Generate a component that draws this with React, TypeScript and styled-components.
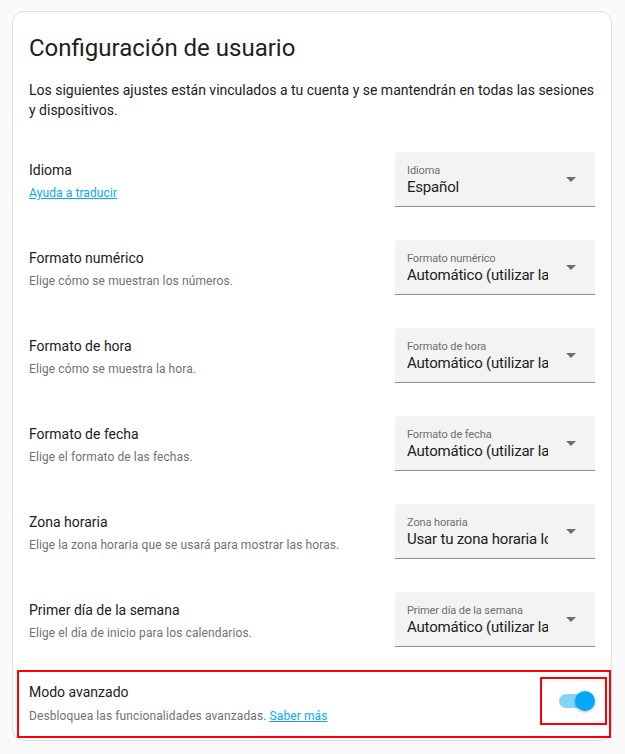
import styled, { createGlobalStyle } from "styled-components";

interface SelectRow {
  label: string;
  secondary: string;
  fieldLabel: string;
  value: string;
  link?: boolean;
}

const rows: SelectRow[] = [
  {
    label: "Idioma",
    secondary: "Ayuda a traducir",
    fieldLabel: "Idioma",
    value: "Español",
    link: true,
  },
  {
    label: "Formato numérico",
    secondary: "Elige cómo se muestran los números.",
    fieldLabel: "Formato numérico",
    value: "Automático (utilizar la configuración de idioma)",
  },
  {
    label: "Formato de hora",
    secondary: "Elige cómo se muestra la hora.",
    fieldLabel: "Formato de hora",
    value: "Automático (utilizar la configuración de idioma)",
  },
  {
    label: "Formato de fecha",
    secondary: "Elige el formato de las fechas.",
    fieldLabel: "Formato de fecha",
    value: "Automático (utilizar la configuración de idioma)",
  },
  {
    label: "Zona horaria",
    secondary: "Elige la zona horaria que se usará para mostrar las horas.",
    fieldLabel: "Zona horaria",
    value: "Usar tu zona horaria local",
  },
  {
    label: "Primer día de la semana",
    secondary: "Elige el día de inicio para los calendarios.",
    fieldLabel: "Primer día de la semana",
    value: "Automático (utilizar la configuración de idioma)",
  },
];

export default function App() {
  return (
    <>
      <GlobalStyle />
      <Page>
        <Card>
          <Header>
            <Title>Configuración de usuario</Title>
            <Description>
              Los siguientes ajustes están vinculados a tu cuenta y se
              mantendrán en todas las sesiones y dispositivos.
            </Description>
          </Header>

          {rows.map((row) => (
            <Row key={row.label}>
              <Info $gap={5} $offset={3}>
                <Heading>{row.label}</Heading>
                {row.link ? (
                  <Secondary>
                    <Link href="#">{row.secondary}</Link>
                  </Secondary>
                ) : (
                  <Secondary>{row.secondary}</Secondary>
                )}
              </Info>
              <Select>
                <FieldLabel>{row.fieldLabel}</FieldLabel>
                <FieldValue>{row.value}</FieldValue>
                <Arrow />
              </Select>
            </Row>
          ))}

          <Highlight>
            <Info $gap={6} $offset={-2}>
              <Heading>Modo avanzado</Heading>
              <Secondary>
                Desbloquea las funcionalidades avanzadas.{" "}
                <Link href="#">Saber más</Link>
              </Secondary>
            </Info>
            <ToggleBox>
              <Track>
                <Thumb />
              </Track>
            </ToggleBox>
          </Highlight>
        </Card>
      </Page>
    </>
  );
}

const GlobalStyle = createGlobalStyle`
  body {
    margin: 0;
    background: #fafafa;
    font-family: Roboto, "Liberation Sans", sans-serif;
    color: #212121;
  }
`;

const Page = styled.div`
  padding: 11px 13px 12px 12px;
`;

const Card = styled.div`
  background: #ffffff;
  border: 1px solid #e0e0e0;
  border-radius: 12px;
  padding-bottom: 2px;
`;

const Header = styled.div`
  padding: 20px 16px 15px;
`;

const Title = styled.h1`
  margin: 0;
  font-size: 24px;
  font-weight: 400;
  line-height: 32px;
  color: #212121;
`;

const Description = styled.p`
  margin: 16px 0 0;
  font-size: 14px;
  line-height: 20px;
  color: #212121;
`;

const Row = styled.div`
  display: flex;
  align-items: center;
  justify-content: space-between;
  height: 88px;
  padding: 0 16px;
`;

const Info = styled.div<{ $gap: number; $offset: number }>`
  display: flex;
  flex-direction: column;
  gap: ${(p) => p.$gap}px;
  margin-top: ${(p) => p.$offset}px;
`;

const Heading = styled.div`
  font-size: 14px;
  line-height: 20px;
  color: #212121;
`;

const Secondary = styled.div`
  font-size: 12px;
  line-height: 16px;
  letter-spacing: 0.1px;
  color: #727272;
`;

const Link = styled.a`
  color: #03a9f4;
  text-decoration: underline;
`;

const Select = styled.div`
  position: relative;
  width: 200px;
  height: 55px;
  box-sizing: border-box;
  padding: 12px 47px 0 12px;
  background: #f3f3f3;
  border-radius: 4px 4px 0 0;
  border-bottom: 1px solid #8a8a8a;
  display: flex;
  flex-direction: column;
`;

const FieldLabel = styled.span`
  font-size: 11px;
  line-height: 13px;
  letter-spacing: -0.1px;
  color: #6f6f6f;
  white-space: nowrap;
`;

const FieldValue = styled.span`
  font-size: 15px;
  line-height: 20px;
  letter-spacing: -0.2px;
  color: #212121;
  white-space: nowrap;
  overflow: hidden;
`;

const Arrow = styled.span`
  position: absolute;
  right: 19px;
  top: 25px;
  width: 0;
  height: 0;
  border-left: 5px solid transparent;
  border-right: 5px solid transparent;
  border-top: 5px solid #6e6e6e;
`;

const Highlight = styled.div`
  display: flex;
  align-items: center;
  justify-content: space-between;
  margin: 7px 0 0 4px;
  height: 68px;
  box-sizing: border-box;
  border: 2px solid #ff0000;
  padding: 0 2px 0 10px;
`;

const ToggleBox = styled.div`
  align-self: flex-start;
  margin-top: 5px;
  width: 67px;
  height: 48px;
  box-sizing: border-box;
  border: 2px solid #ff0000;
  display: flex;
  align-items: center;
  justify-content: flex-end;
  padding-right: 14px;
`;

const Track = styled.div`
  position: relative;
  width: 32px;
  height: 14px;
  border-radius: 7px;
  background: #81d4fa;
`;

const Thumb = styled.div`
  position: absolute;
  right: -4px;
  top: -3px;
  width: 20px;
  height: 20px;
  border-radius: 50%;
  background: #03a9f4;
  box-shadow: 0 1px 3px rgba(0, 0, 0, 0.3);
`;
